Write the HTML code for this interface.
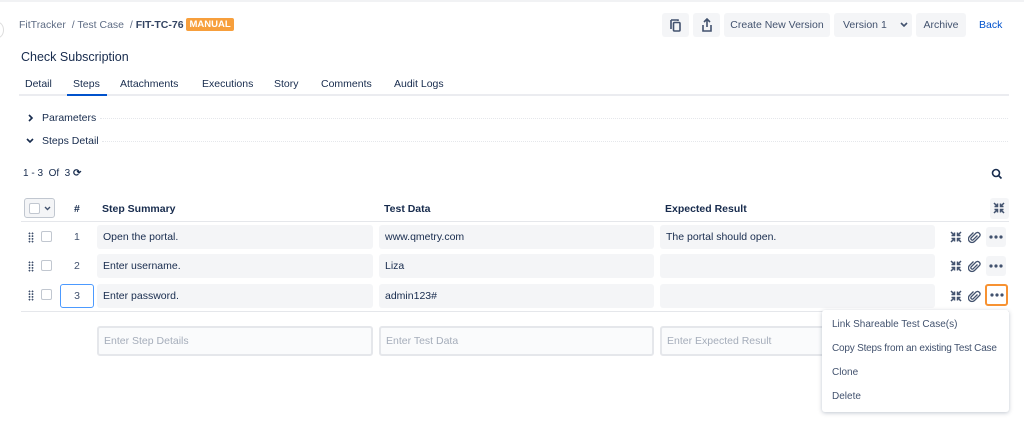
<!DOCTYPE html>
<html><head><meta charset="utf-8"><style>
*{box-sizing:border-box;margin:0;padding:0}
body{width:1024px;height:421px;background:#fff;font-family:"Liberation Sans",sans-serif;color:#172b4d;position:relative;overflow:hidden;font-size:10.5px}
.a{position:absolute;white-space:nowrap}
.btn{position:absolute;top:13px;height:24px;background:#f4f5f7;border-radius:3px;color:#42526e;font-size:10.5px;line-height:24px;text-align:center}
.cell{position:absolute;height:24px;background:#f4f5f7;border-radius:3px;line-height:24px;padding-left:6px;font-size:10.5px;color:#172b4d}
.inp{position:absolute;top:326px;height:30px;border:2px solid #e5e7eb;background:#fafbfc;border-radius:3px;line-height:26px;padding-left:5px;color:#a5adba;font-size:10.5px}
.cb{position:absolute;width:11px;height:11px;border:1px solid #c1c7d0;border-radius:2px;background:#fff}
.dots{position:absolute;width:20px;height:20px;background:#f4f5f7;border-radius:3px}
.dots svg{position:absolute;left:3px;top:8px}
.grip{position:absolute;width:6px;height:11px;background:radial-gradient(circle,#42526e 0.8px,transparent 1px) 0 0/3px 2.75px}
.mi{position:absolute;left:832px;font-size:10px;color:#42526e}
.tab{position:absolute;top:78px;font-size:10.5px}
</style></head><body>
<div class="a" style="left:0;top:0;width:1024px;height:2px;background:#f1f2f4"></div>
<div class="a" style="left:-8px;top:22px;width:12px;height:16px;border:1px solid #ddd;border-radius:50%"></div>
<div class="a" style="left:19px;top:19px;color:#5e6c84;font-size:10.5px">FitTracker &nbsp;/ Test Case &nbsp;/ <b style="color:#344563">FIT-TC-76</b> <span style="display:inline-block;background:#f79f3c;border-radius:2px;color:#fff;font-weight:bold;font-size:9.5px;line-height:13px;padding:0 3px;vertical-align:top;margin-top:-1px">MANUAL</span></div>

<svg width="0" height="0" style="position:absolute"><defs><g id="cmp" fill="none" stroke="#42526e" stroke-width="1.5"><path d="M1 1l3.5 3.5M4.5 1.5v3h-3M11 1l-3.5 3.5M7.5 1.5v3h3M1 11l3.5-3.5M4.5 10.5v-3h-3M11 11l-3.5-3.5M7.5 10.5v-3h3"/></g>
<g id="clip" fill="none" stroke="#42526e" stroke-width="1.3"><path d="M9.5 4.5l-4.5 4.5a1.5 1.5 0 0 1-2-2l5-5a2.5 2.5 0 0 1 3.5 3.5l-5 5a3.5 3.5 0 0 1-5-5l4-4"/></g>
<g id="dt" fill="#42526e"><circle cx="2" cy="2" r="1.6"/><circle cx="7" cy="2" r="1.6"/><circle cx="12" cy="2" r="1.6"/></g></defs></svg>

<div class="btn" style="left:662px;width:27px"><svg width="14" height="14" viewBox="0 0 14 14" style="margin-top:5px" fill="none" stroke="#42526e" stroke-width="1.6"><path d="M2 2h7v1M2 2v9"/><rect x="4.5" y="4.5" width="6.5" height="8.5" rx="1"/></svg></div>
<div class="btn" style="left:693px;width:27px"><svg width="14" height="14" viewBox="0 0 14 14" style="margin-top:5px" fill="none" stroke="#42526e" stroke-width="1.6"><path d="M7 1v8M4 4l3-3 3 3M3 7v6h8V7"/></svg></div>
<div class="btn" style="left:724px;width:106px">Create New Version</div>
<div class="btn" style="left:834px;width:78px;text-align:left;padding-left:9px">Version 1 <svg width="8" height="6" style="margin-left:10px" fill="none" stroke="#42526e" stroke-width="1.6"><path d="M1 1l3 3 3-3"/></svg></div>
<div class="btn" style="left:916px;width:50px">Archive</div>
<div class="a" style="left:979px;top:19px;color:#0052cc">Back</div>

<div class="a" style="left:21px;top:50px;font-size:12.5px;color:#172b4d">Check Subscription</div>
<div class="a" style="left:19px;top:94px;width:990px;height:2px;background:#ebecf0"></div>
<div class="tab" style="left:25px">Detail</div>
<div class="tab" style="left:73px">Steps</div>
<div class="a" style="left:67px;top:94px;width:40px;height:2px;background:#0052cc"></div>
<div class="tab" style="left:120px">Attachments</div>
<div class="tab" style="left:202px">Executions</div>
<div class="tab" style="left:274px">Story</div>
<div class="tab" style="left:321px">Comments</div>
<div class="tab" style="left:394px">Audit Logs</div>

<svg class="a" style="left:28px;top:114px" width="6" height="8" fill="none" stroke="#172b4d" stroke-width="1.6"><path d="M1 1l3 3-3 3"/></svg>
<div class="a" style="left:42px;top:112px">Parameters</div>
<div class="a" style="left:100px;top:118px;width:908px;border-top:1px dotted #e5e7eb"></div>
<svg class="a" style="left:26px;top:138px" width="8" height="6" fill="none" stroke="#172b4d" stroke-width="1.6"><path d="M1 1l3 3 3-3"/></svg>
<div class="a" style="left:42px;top:135px">Steps Detail</div>
<div class="a" style="left:102px;top:141px;width:906px;border-top:1px dotted #e5e7eb"></div>

<div class="a" style="left:23px;top:168px;font-size:10px">1 - 3 &nbsp;Of &nbsp;3 <b>&#10227;</b></div>
<svg class="a" style="left:991px;top:168px" width="12" height="12" viewBox="0 0 12 12" fill="none" stroke="#172b4d" stroke-width="1.6"><circle cx="5" cy="5" r="3.5"/><path d="M7.5 7.5l3 3"/></svg>

<div class="a" style="left:24px;top:198px;width:31px;height:20px;border:1px solid #c1c7d0;border-radius:3px;background:#f4f5f7"></div>
<div class="cb" style="left:29px;top:203px"></div>
<svg class="a" style="left:44px;top:206px" width="7" height="5" fill="none" stroke="#42526e" stroke-width="1.4"><path d="M1 1l2.5 2.5 2.5-2.5"/></svg>
<div class="a" style="left:74px;top:203px;font-weight:bold">#</div>
<div class="a" style="left:102px;top:203px;font-weight:bold">Step Summary</div>
<div class="a" style="left:384px;top:203px;font-weight:bold">Test Data</div>
<div class="a" style="left:665px;top:203px;font-weight:bold">Expected Result</div>
<div class="a" style="left:990px;top:198px;width:19px;height:21px;background:#f4f5f7;border-radius:3px"></div>
<div class="a" style="left:21px;top:221px;width:988px;height:1px;background:#e5e7eb"></div>

<div class="grip" style="left:28px;top:232px"></div><div class="cb" style="left:41px;top:231px"></div>
<div class="a" style="left:74px;top:231px;color:#42526e">1</div>
<div class="cell" style="left:97px;top:225px;width:276px">Open the portal.</div>
<div class="cell" style="left:379px;top:225px;width:275px">www.qmetry.com</div>
<div class="cell" style="left:660px;top:225px;width:275px">The portal should open.</div>

<div class="grip" style="left:28px;top:261px"></div><div class="cb" style="left:41px;top:260px"></div>
<div class="a" style="left:74px;top:260px;color:#42526e">2</div>
<div class="cell" style="left:97px;top:254px;width:276px">Enter username.</div>
<div class="cell" style="left:379px;top:254px;width:275px">Liza</div>
<div class="cell" style="left:660px;top:254px;width:275px"></div>

<div class="grip" style="left:28px;top:290px"></div><div class="cb" style="left:41px;top:289px"></div>
<div class="a" style="left:60px;top:284px;width:34px;height:24px;border:1px solid #4c9aff;border-radius:3px;text-align:center;line-height:22px;color:#42526e">3</div>
<div class="cell" style="left:97px;top:284px;width:276px">Enter password.</div>
<div class="cell" style="left:379px;top:284px;width:275px">admin123#</div>
<div class="cell" style="left:660px;top:284px;width:275px"></div>

<div class="a" style="left:21px;top:311px;width:988px;height:1px;background:#e5e7eb"></div>

<div class="inp" style="left:97px;width:276px">Enter Step Details</div>
<div class="inp" style="left:379px;width:275px">Enter Test Data</div>
<div class="inp" style="left:660px;width:200px">Enter Expected Result</div>

<svg class="a" style="left:993px;top:202px" width="12" height="12"><use href="#cmp"/></svg>
<svg class="a" style="left:950px;top:231px" width="12" height="12"><use href="#cmp"/></svg>
<svg class="a" style="left:968px;top:231px" width="13" height="13"><use href="#clip"/></svg>
<div class="dots" style="left:986px;top:227px"><svg width="14" height="4"><use href="#dt"/></svg></div>
<svg class="a" style="left:950px;top:260px" width="12" height="12"><use href="#cmp"/></svg>
<svg class="a" style="left:968px;top:260px" width="13" height="13"><use href="#clip"/></svg>
<div class="dots" style="left:986px;top:256px"><svg width="14" height="4"><use href="#dt"/></svg></div>
<svg class="a" style="left:950px;top:290px" width="12" height="12"><use href="#cmp"/></svg>
<svg class="a" style="left:968px;top:290px" width="13" height="13"><use href="#clip"/></svg>
<div class="dots" style="left:985px;top:284px;width:23px;height:22px;background:#fff;border:2px solid #f79232"><svg width="14" height="4" style="left:2.5px;top:7px"><use href="#dt"/></svg></div>

<div class="a" style="left:822px;top:310px;width:187px;height:102px;background:#fff;border-radius:3px;box-shadow:0 1px 4px rgba(9,30,66,.25)"></div>
<div class="mi" style="top:319px">Link Shareable Test Case(s)</div>
<div class="mi" style="top:343px;letter-spacing:-0.2px">Copy Steps from an existing Test Case</div>
<div class="mi" style="top:367px">Clone</div>
<div class="mi" style="top:391px">Delete</div>
</body></html>
